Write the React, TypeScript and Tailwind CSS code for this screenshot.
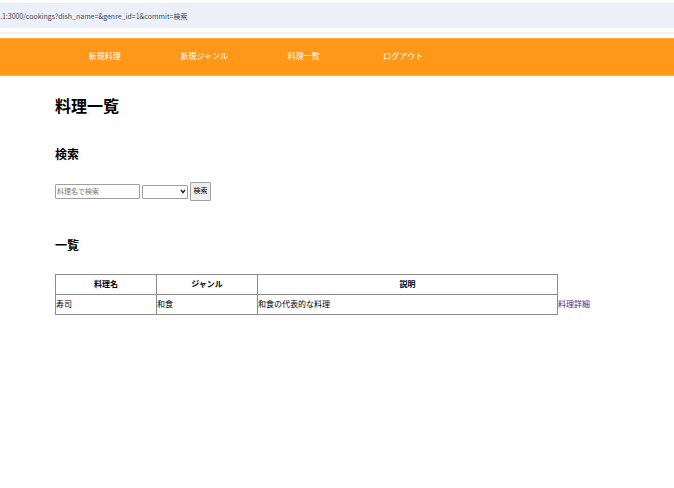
import React from "react";

const navItems = ["新規料理", "新規ジャンル", "料理一覧", "ログアウト"];

const dishes = [
  { name: "寿司", genre: "和食", description: "和食の代表的な料理" },
];

function AddressBar() {
  return (
    <div className="border-b-2 border-[#f3f3f5] pt-[3px] pb-1">
      <div className="flex h-[25px] items-center bg-[#ebf0fa] font-['Noto_Sans_CJK_JP',sans-serif] text-[7px] leading-3 text-[#45484f]">
        .1:3000/cookings?dish_name=&amp;genre_id=1&amp;commit=検索
      </div>
    </div>
  );
}

function NavBar() {
  return (
    <nav className="mt-1 border-y border-[#ffb040] bg-[#ff9818] pl-[55px]">
      <ul className="grid h-9 max-w-[398px] grid-cols-4 items-center pb-0.5 text-center text-[8px] leading-4 text-white">
        {navItems.map((item) => (
          <li key={item}>
            <a href="#">{item}</a>
          </li>
        ))}
      </ul>
    </nav>
  );
}

function SearchForm() {
  return (
    <form className="mt-[17px] flex items-center gap-[2px] text-[7px]" onSubmit={(e) => e.preventDefault()}>
      <input
        type="text"
        aria-label="料理名"
        placeholder="料理名で検索"
        className="h-[15px] w-[85px] rounded-[1px] border border-[#a0a0a0] px-px placeholder:text-[#757575]"
      />
      <div className="grid items-center">
        <select
          aria-label="ジャンル"
          className="col-start-1 row-start-1 h-[14px] w-[46px] appearance-none rounded-[1px] border border-[#a0a0a0] bg-white"
        >
          <option></option>
          <option>和食</option>
        </select>
        <svg
          viewBox="0 0 6 5"
          className="pointer-events-none col-start-1 row-start-1 mr-[2px] h-[5px] w-[6px] justify-self-end"
          fill="none"
          stroke="#222"
          strokeWidth="1.5"
        >
          <path d="M1 1 3 3.6 5 1" />
        </svg>
      </div>
      <button
        type="submit"
        className="h-[19px] w-[21px] rounded-[1px] border border-[#a0a0a0] bg-[#efefef] text-center text-black"
      >
        検索
      </button>
    </form>
  );
}

function DishTable() {
  const cell = "border border-[#8c8c8c] pb-0.5";
  return (
    <table className="mt-[18px] table-fixed border-collapse text-[8px] leading-4">
      <colgroup>
        <col className="w-[101px]" />
        <col className="w-[101px]" />
        <col className="w-[300px]" />
        <col className="w-[36px]" />
      </colgroup>
      <thead>
        <tr className="h-5">
          <th className={cell}>料理名</th>
          <th className={cell}>ジャンル</th>
          <th className={cell}>説明</th>
        </tr>
      </thead>
      <tbody>
        {dishes.map((dish) => (
          <tr key={dish.name} className="h-5">
            <td className={cell}>{dish.name}</td>
            <td className={cell}>{dish.genre}</td>
            <td className={cell}>{dish.description}</td>
            <td className="pb-0.5 whitespace-nowrap">
              <a href="#" className="text-[#551a8b]">料理詳細</a>
            </td>
          </tr>
        ))}
      </tbody>
    </table>
  );
}

export default function App() {
  return (
    <div
      lang="ja"
      className="min-h-screen bg-white font-['Open_Sans','Noto_Sans_CJK_JP',sans-serif] text-black"
    >
      <AddressBar />
      <NavBar />
      <main className="pl-[55px]">
        <h1 className="mt-[18px] text-[16px] leading-6 font-bold">料理一覧</h1>
        <h2 className="mt-[27px] text-[12px] leading-5 font-bold">検索</h2>
        <SearchForm />
        <h2 className="mt-[35px] text-[12px] leading-5 font-bold">一覧</h2>
        <DishTable />
      </main>
    </div>
  );
}
